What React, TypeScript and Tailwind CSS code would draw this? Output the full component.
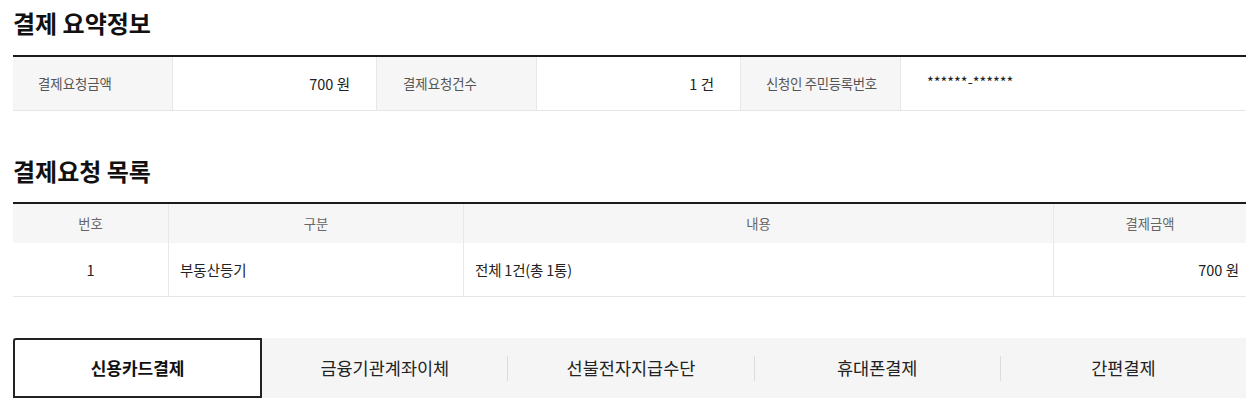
import React from "react";

const font = { fontFamily: '"Noto Sans CJK KR", "Noto Sans", sans-serif' };

export default function App() {
  const tabs = ["신용카드결제", "금융기관계좌이체", "선불전자지급수단", "휴대폰결제", "간편결제"];
  return (
    <div className="bg-white w-[1246px] h-[416px] overflow-hidden pl-[13px]" style={font}>
      <div className="w-[1233px]">
        <h2 className="pt-[6px] text-[24px] leading-[34px] font-bold text-[#111]">결제 요약정보</h2>
        <div className="mt-[15px] border-t-2 border-[#1a1a1a] border-b border-b-[#e6e6e6] flex h-[56px]">
          <div className="w-[159px] bg-[#f6f6f6] flex items-center pl-[25px] text-[13.4px] text-[#555]">결제요청금액</div>
          <div className="w-[204px] border-l border-[#e8e8e8] flex items-center justify-end pr-[26px] text-[14.5px] text-[#222]">700 원</div>
          <div className="w-[160px] border-l border-[#e8e8e8] bg-[#f6f6f6] flex items-center pl-[26px] text-[13.4px] text-[#555]">결제요청건수</div>
          <div className="w-[204px] border-l border-[#e8e8e8] flex items-center justify-end pr-[26px] text-[14.5px] text-[#222]">1 건</div>
          <div className="w-[160px] border-l border-[#e8e8e8] bg-[#f6f6f6] flex items-center pl-[25px] text-[13.4px] text-[#555] tracking-[-0.3px]">신청인 주민등록번호</div>
          <div className="w-[346px] border-l border-[#e8e8e8] flex items-center pl-[26px] pb-[4px] text-[14.5px] text-[#222]">******-******</div>
        </div>

        <h2 className="mt-[43px] text-[24px] leading-[34px] font-bold text-[#111]">결제요청 목록</h2>
        <div className="mt-[14px] border-t-2 border-[#1a1a1a]">
          <div className="flex h-[39px] bg-[#f6f6f6] text-[13.3px] text-[#666]">
            <div className="w-[155px] flex items-center justify-center">번호</div>
            <div className="w-[295px] border-l border-[#e8e8e8] flex items-center justify-center">구분</div>
            <div className="w-[590px] border-l border-[#e8e8e8] flex items-center justify-center">내용</div>
            <div className="w-[193px] border-l border-[#e8e8e8] flex items-center justify-center">결제금액</div>
          </div>
          <div className="flex h-[54px] border-b border-[#e6e6e6] text-[14.5px] text-[#222]">
            <div className="w-[155px] flex items-center justify-center">1</div>
            <div className="w-[295px] border-l border-[#e8e8e8] flex items-center pl-[11px]">부동산등기</div>
            <div className="w-[590px] border-l border-[#e8e8e8] flex items-center pl-[11px] tracking-[-0.2px]">전체 1건(총 1통)</div>
            <div className="w-[193px] border-l border-[#e8e8e8] flex items-center justify-end pr-[7px]">700 원</div>
          </div>
        </div>

        <div className="mt-[41px] h-[60px] bg-[#f5f5f5] flex items-stretch">
          {tabs.map((t, i) => (
            <React.Fragment key={t}>
              {i >= 2 && <div className="w-px h-[25px] self-center bg-[#dcdcdc]" />}
              {i === 0 ? (
                <div className="flex-1 bg-white border-2 border-[#222] rounded-tl-[3px] flex items-center justify-center text-[17px] font-bold text-[#111]">
                  {t}
                </div>
              ) : (
                <div className="flex-1 flex items-center justify-center text-[17.5px] text-[#222]">{t}</div>
              )}
            </React.Fragment>
          ))}
        </div>
      </div>
    </div>
  );
}
